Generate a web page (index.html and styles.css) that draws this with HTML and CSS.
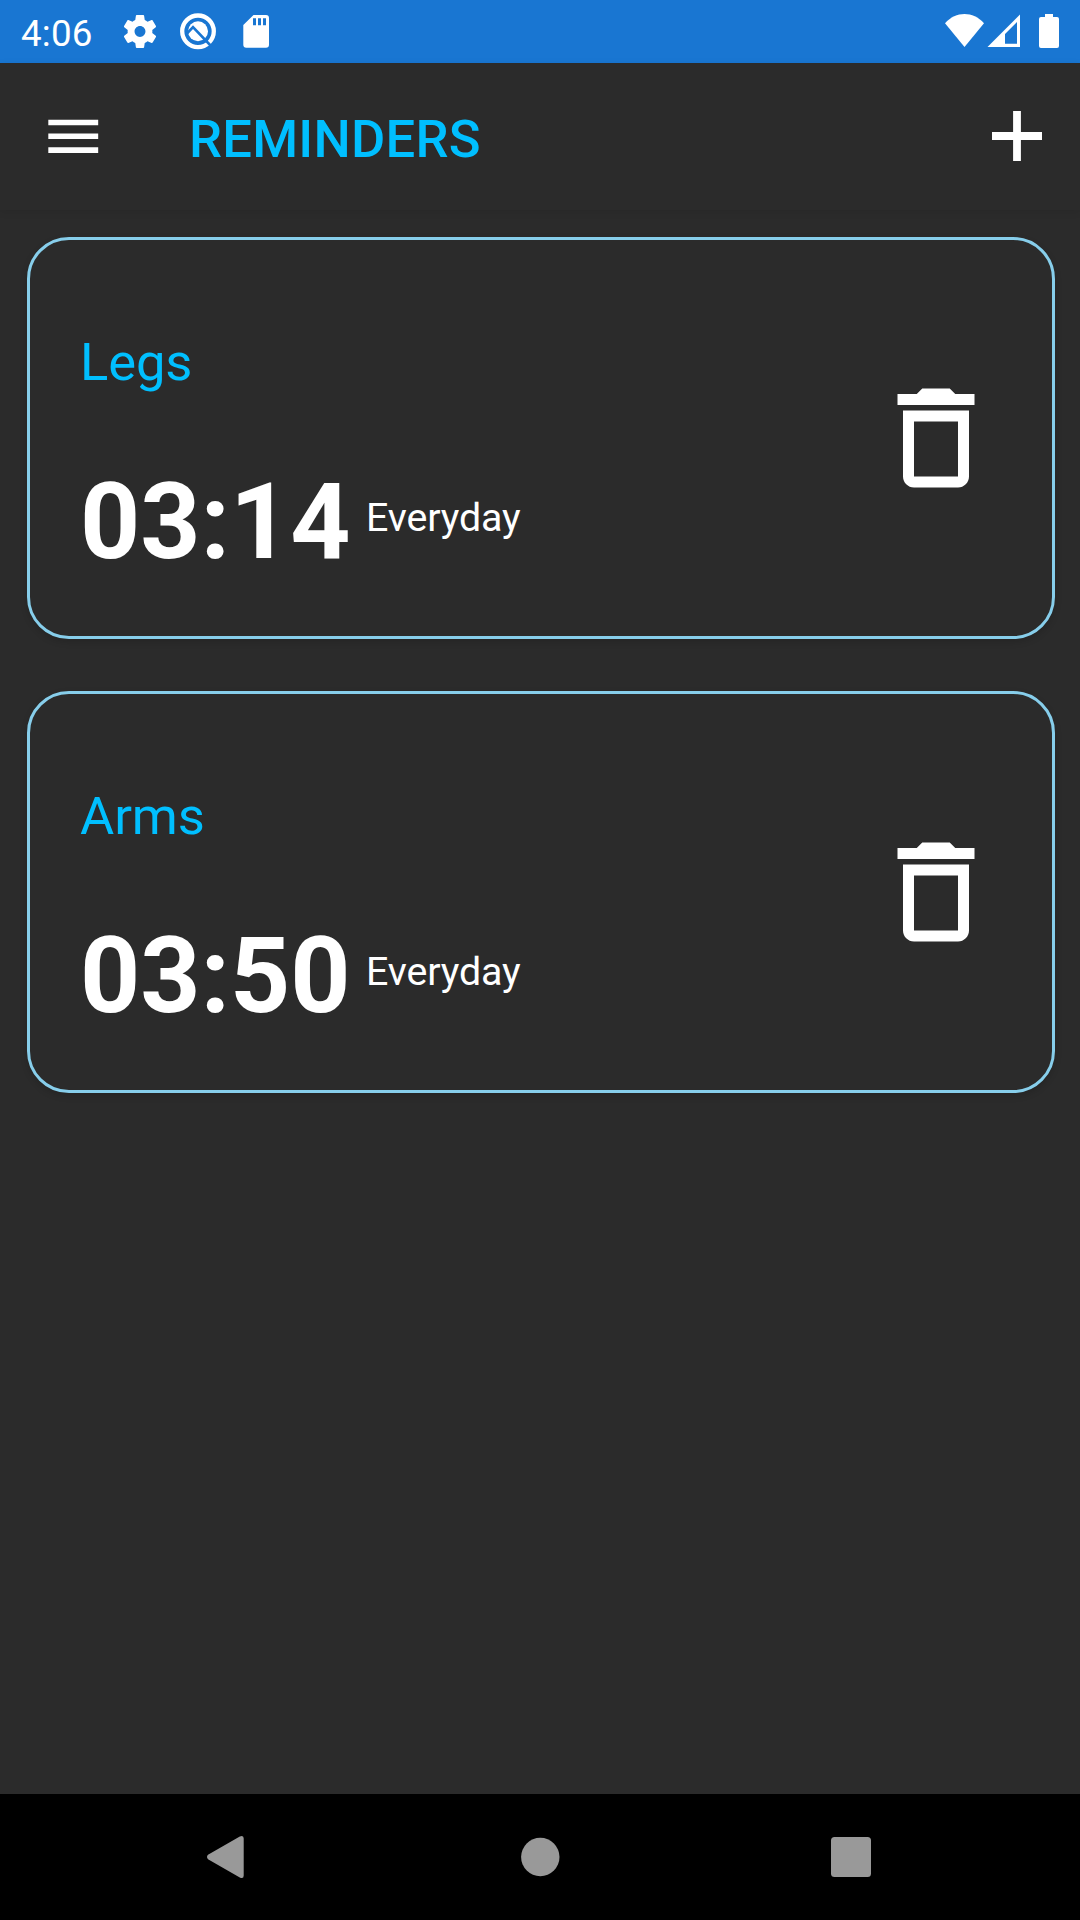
FILE: index.html
```html
<!DOCTYPE html>
<html lang="en">
<head>
<meta charset="utf-8">
<title>Reminders</title>
<link rel="stylesheet" href="styles.css">
</head>
<body>
<div class="screen">
  <div class="status">
    <span class="clock">4:06</span>
    <svg class="status-left" viewBox="0 0 160 63">
      <path transform="translate(20.2 11.7) scale(1.65)" d="M19.43 12.98c.04-.32.07-.64.07-.98s-.03-.66-.07-.98l2.11-1.65c.19-.15.24-.42.12-.64l-2-3.46c-.12-.22-.39-.3-.61-.22l-2.49 1c-.52-.4-1.08-.73-1.69-.98l-.38-2.65C14.46 2.18 14.25 2 14 2h-4c-.25 0-.46.18-.49.42l-.38 2.65c-.61.25-1.17.59-1.69.98l-2.49-1c-.23-.09-.49 0-.61.22l-2 3.46c-.13.22-.07.49.12.64l2.11 1.65c-.04.32-.07.65-.07.98s.03.66.07.98l-2.11 1.65c-.19.15-.24.42-.12.64l2 3.46c.12.22.39.3.61.22l2.49-1c.52.4 1.08.73 1.69.98l.38 2.65c.03.24.24.42.49.42h4c.25 0 .46-.18.49-.42l.38-2.65c.61-.25 1.17-.59 1.69-.98l2.49 1c.23.09.49 0 .61-.22l2-3.46c.12-.22.07-.49-.12-.64l-2.11-1.65zM12 15.3c-1.82 0-3.3-1.48-3.3-3.3s1.48-3.3 3.3-3.3 3.3 1.48 3.3 3.3-1.48 3.3-3.3 3.3z"/>
      <circle class="ring" cx="98" cy="31.3" r="15.8"/>
      <circle cx="98" cy="31.3" r="10"/>
      <path class="cut" d="M86 34.500l7-7.300L111.500 46.500"/>
      <path fill-rule="evenodd" d="M153.500 15H166q3 0 3 3v26.700q0 3-3 3h-19.700q-3 0-3-3V25zM153 18.300v7h3v-7zM158 18.300v7h3v-7zM163 18.300v7h3v-7z"/>
    </svg>
    <svg class="status-right" viewBox="0 0 120 63">
      <path d="M5 23.300C16 11 33 11 44 23.300L24.500 47z"/>
      <path fill-rule="evenodd" d="M47.500 47L80 14.500V47zM65 43.700h12V22L65 34z"/>
      <path d="M105 14h8v3h4q2 0 2 2v27q0 2-2 2h-16q-2 0-2-2V19q0-2 2-2h4z"/>
    </svg>
  </div>
  <header class="appbar">
    <svg class="menu" viewBox="0 0 24 24"><path d="M3 18h18v-2H3v2zm0-5h18v-2H3v2zm0-7v2h18V6H3z"/></svg>
    <h1>REMINDERS</h1>
    <svg class="add" viewBox="0 0 50 50"><path d="M21.100 0h7.800v21.100H50v7.800H28.900V50h-7.800V28.900H0v-7.800h21.100z"/></svg>
  </header>
  <main>
    <section class="card">
      <div class="info">
        <h2>Legs</h2>
        <div class="row"><span class="time">03:14</span><span class="repeat">Everyday</span></div>
      </div>
      <svg class="trash" viewBox="0 0 24 24"><path d="M6 19c0 1.100.9 2 2 2h8c1.100 0 2-.9 2-2V7H6v12zM8 9h8v10H8V9zm7.500-5l-1-1h-5l-1 1H5v2h14V4z"/></svg>
    </section>
    <section class="card">
      <div class="info">
        <h2>Arms</h2>
        <div class="row"><span class="time">03:50</span><span class="repeat">Everyday</span></div>
      </div>
      <svg class="trash" viewBox="0 0 24 24"><path d="M6 19c0 1.100.9 2 2 2h8c1.100 0 2-.9 2-2V7H6v12zM8 9h8v10H8V9zm7.500-5l-1-1h-5l-1 1H5v2h14V4z"/></svg>
    </section>
  </main>
  <nav>
    <svg viewBox="0 0 60 60"><path d="M12 27.800L43.800 9.500q3.900-1.800 3.900 2v37q0 3.800-3.900 2L12 32.200q-2-2.200 0-4.400z"/></svg>
    <svg viewBox="0 0 60 60"><circle cx="31.300" cy="30" r="19.200"/></svg>
    <svg viewBox="0 0 60 60"><rect x="10" y="10" width="40" height="40" rx="3.500"/></svg>
  </nav>
</div>
</body>
</html>
```
FILE: styles.css
```css
* { box-sizing: border-box; }
body { margin: 0; background: #2b2b2b; font-family: Roboto, sans-serif; color: #fff; }
svg { display: block; fill: #fff; flex: none; }
h1, h2 { margin: 0; color: #00bfff; font-size: 52.5px; line-height: 62px; white-space: nowrap; }
.screen { width: 1080px; height: 1920px; display: flex; flex-direction: column; }
.status { height: 63px; background: #1976d2; display: flex; padding-left: 21px; }
.clock { width: 79px; font-size: 36.75px; letter-spacing: .2px; line-height: 43px; padding-top: 12px; white-space: nowrap; }
.status-left { width: 160px; height: 63px; overflow: visible; }
.status-right { width: 120px; height: 63px; margin-left: auto; margin-right: 20px; }
.ring { fill: none; stroke: #fff; stroke-width: 4.3; }
.cut { fill: none; stroke: #1976d2; stroke-width: 2.6; }
.appbar { height: 147px; display: flex; align-items: center; padding: 0 38px 1px 39.500px; box-shadow: 0 2px 8px rgba(0, 0, 0, .08); }
.menu { width: 66.5px; height: 66.5px; }
h1 { font-weight: 500; letter-spacing: .25px; margin-left: 83px; padding-top: 5px; }
.add { width: 50px; height: 50px; margin-left: auto; }
main { flex: 1; padding: 27px 25px 0 27px; display: flex; flex-direction: column; gap: 52px; }
.card { height: 402px; border: 3px solid #87ceeb; border-radius: 42px; display: flex; justify-content: space-between; padding: 91px 50px 0; box-shadow: 0 3px 7px rgba(0, 0, 0, .15); }
h2 { font-weight: 400; letter-spacing: -.1px; }
.row { display: flex; margin-top: 68px; }
.time { font-size: 105px; line-height: 124px; font-weight: 700; }
.repeat { font-size: 39.375px; letter-spacing: -.15px; line-height: 46px; padding-top: 34px; margin-left: 15.5px; }
.trash { width: 132px; height: 132px; margin-top: 40.5px; }
nav { height: 126px; background: #000; display: flex; justify-content: space-between; align-items: center; padding: 0 199px 0 196px; }
nav svg { width: 60px; height: 60px; fill: #999; }
```
